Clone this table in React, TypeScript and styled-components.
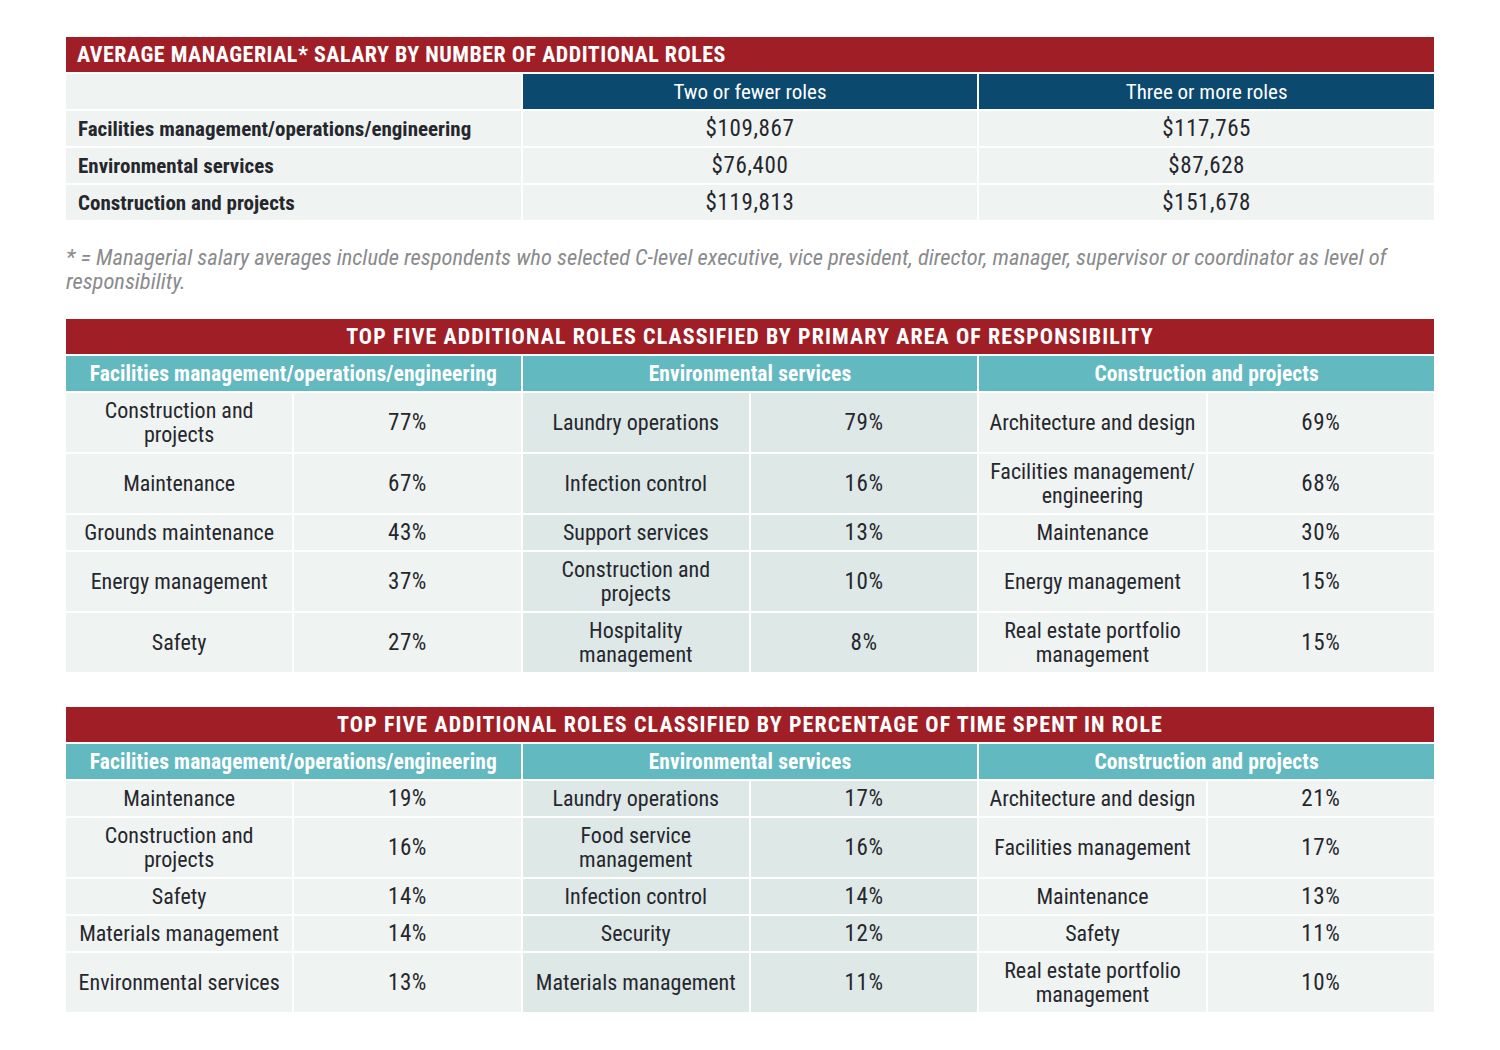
import React from "react";
import styled, { createGlobalStyle } from "styled-components";

const Global = createGlobalStyle`
  html, body { margin: 0; padding: 0; background: #ffffff; }
  body { font-family: "Liberation Sans Narrow", "Roboto Condensed", "Liberation Sans", sans-serif; color: #26272d; }
`;

const Page = styled.div`
  width: 1368px;
  padding: 37px 66px 30px 66px;
  display: flex;
  flex-direction: column;
`;

const Title = styled.div<{ $center?: boolean; $spacing: number }>`
  background: #a01f27;
  color: #ffffff;
  font-weight: 700;
  font-size: 22px;
  letter-spacing: ${(p) => p.$spacing}px;
  height: 35px;
  display: flex;
  align-items: center;
  justify-content: ${(p) => (p.$center ? "center" : "flex-start")};
  padding: 0 11px;
  margin-bottom: 2px;
`;

const Grid = styled.div<{ $cols: number }>`
  display: grid;
  grid-template-columns: repeat(${(p) => p.$cols}, minmax(0, 1fr));
  gap: 2px;
  background: #ffffff;
`;

const BlankHead = styled.div`
  background: #eff3f2;
  height: 35px;
`;

const BlueHead = styled.div`
  background: #0b496f;
  color: #ffffff;
  font-size: 21px;
  height: 35px;
  display: flex;
  align-items: center;
  justify-content: center;
`;

const TealHead = styled.div`
  grid-column: span 2;
  background: #63b9c0;
  color: #ffffff;
  font-weight: 700;
  font-size: 21.5px;
  letter-spacing: 0.1px;
  height: 35px;
  display: flex;
  align-items: center;
  justify-content: center;
`;

const LabelCell = styled.div`
  background: #eff3f2;
  font-weight: 700;
  font-size: 21px;
  height: 35px;
  display: flex;
  align-items: center;
  padding: 0 12px;
`;

const ValueCell = styled.div`
  background: #eff3f2;
  font-size: 23px;
  letter-spacing: 0.6px;
  height: 35px;
  display: flex;
  align-items: center;
  justify-content: center;
`;

const Cell = styled.div<{ $tall?: boolean; $mid?: boolean; $num?: boolean }>`
  background: ${(p) => (p.$mid ? "#dde8e7" : "#eff3f2")};
  font-size: ${(p) => (p.$num ? "23px" : "22px")};
  letter-spacing: ${(p) => (p.$num ? "0.6px" : "0")};
  line-height: 24px;
  height: ${(p) => (p.$tall ? "59px" : "35px")};
  display: flex;
  align-items: center;
  justify-content: center;
  text-align: center;
  white-space: pre-line;
  box-sizing: border-box;
`;

const Note = styled.p`
  margin: 25px 0 26px 0;
  font-style: italic;
  color: #8a8b8d;
  font-size: 22.5px;
  line-height: 24px;
`;

const Gap = styled.div`
  height: 35px;
`;

type Row = { tall?: boolean; cells: [string, string, string, string, string, string] };

const primary: Row[] = [
  { tall: true, cells: ["Construction and\nprojects", "77%", "Laundry operations", "79%", "Architecture and design", "69%"] },
  { tall: true, cells: ["Maintenance", "67%", "Infection control", "16%", "Facilities management/\nengineering", "68%"] },
  { cells: ["Grounds maintenance", "43%", "Support services", "13%", "Maintenance", "30%"] },
  { tall: true, cells: ["Energy management", "37%", "Construction and\nprojects", "10%", "Energy management", "15%"] },
  { tall: true, cells: ["Safety", "27%", "Hospitality\nmanagement", "8%", "Real estate portfolio\nmanagement", "15%"] },
];

const time: Row[] = [
  { cells: ["Maintenance", "19%", "Laundry operations", "17%", "Architecture and design", "21%"] },
  { tall: true, cells: ["Construction and\nprojects", "16%", "Food service\nmanagement", "16%", "Facilities management", "17%"] },
  { cells: ["Safety", "14%", "Infection control", "14%", "Maintenance", "13%"] },
  { cells: ["Materials management", "14%", "Security", "12%", "Safety", "11%"] },
  { tall: true, cells: ["Environmental services", "13%", "Materials management", "11%", "Real estate portfolio\nmanagement", "10%"] },
];

const groups = ["Facilities management/operations/engineering", "Environmental services", "Construction and projects"];

function RolesTable({ title, rows }: { title: string; rows: Row[] }) {
  return (
    <div>
      <Title $center $spacing={1.1}>{title}</Title>
      <Grid $cols={6}>
        {groups.map((g) => (
          <TealHead key={g}>{g}</TealHead>
        ))}
        {rows.map((r, i) =>
          r.cells.map((c, j) => (
            <Cell key={`${i}-${j}`} $tall={r.tall} $mid={j === 2 || j === 3} $num={j % 2 === 1}>
              {c}
            </Cell>
          ))
        )}
      </Grid>
    </div>
  );
}

const salary = [
  ["Facilities management/operations/engineering", "$109,867", "$117,765"],
  ["Environmental services", "$76,400", "$87,628"],
  ["Construction and projects", "$119,813", "$151,678"],
];

export default function App() {
  return (
    <>
      <Global />
      <Page>
        <div>
          <Title $spacing={0.5}>AVERAGE MANAGERIAL* SALARY BY NUMBER OF ADDITIONAL ROLES</Title>
          <Grid $cols={3}>
            <BlankHead />
            <BlueHead>Two or fewer roles</BlueHead>
            <BlueHead>Three or more roles</BlueHead>
            {salary.map((r) => (
              <React.Fragment key={r[0]}>
                <LabelCell>{r[0]}</LabelCell>
                <ValueCell>{r[1]}</ValueCell>
                <ValueCell>{r[2]}</ValueCell>
              </React.Fragment>
            ))}
          </Grid>
        </div>
        <Note>
          * = Managerial salary averages include respondents who selected C-level executive, vice president, director, manager, supervisor or coordinator as level of responsibility.
        </Note>
        <RolesTable title="TOP FIVE ADDITIONAL ROLES CLASSIFIED BY PRIMARY AREA OF RESPONSIBILITY" rows={primary} />
        <Gap />
        <RolesTable title="TOP FIVE ADDITIONAL ROLES CLASSIFIED BY PERCENTAGE OF TIME SPENT IN ROLE" rows={time} />
      </Page>
    </>
  );
}
